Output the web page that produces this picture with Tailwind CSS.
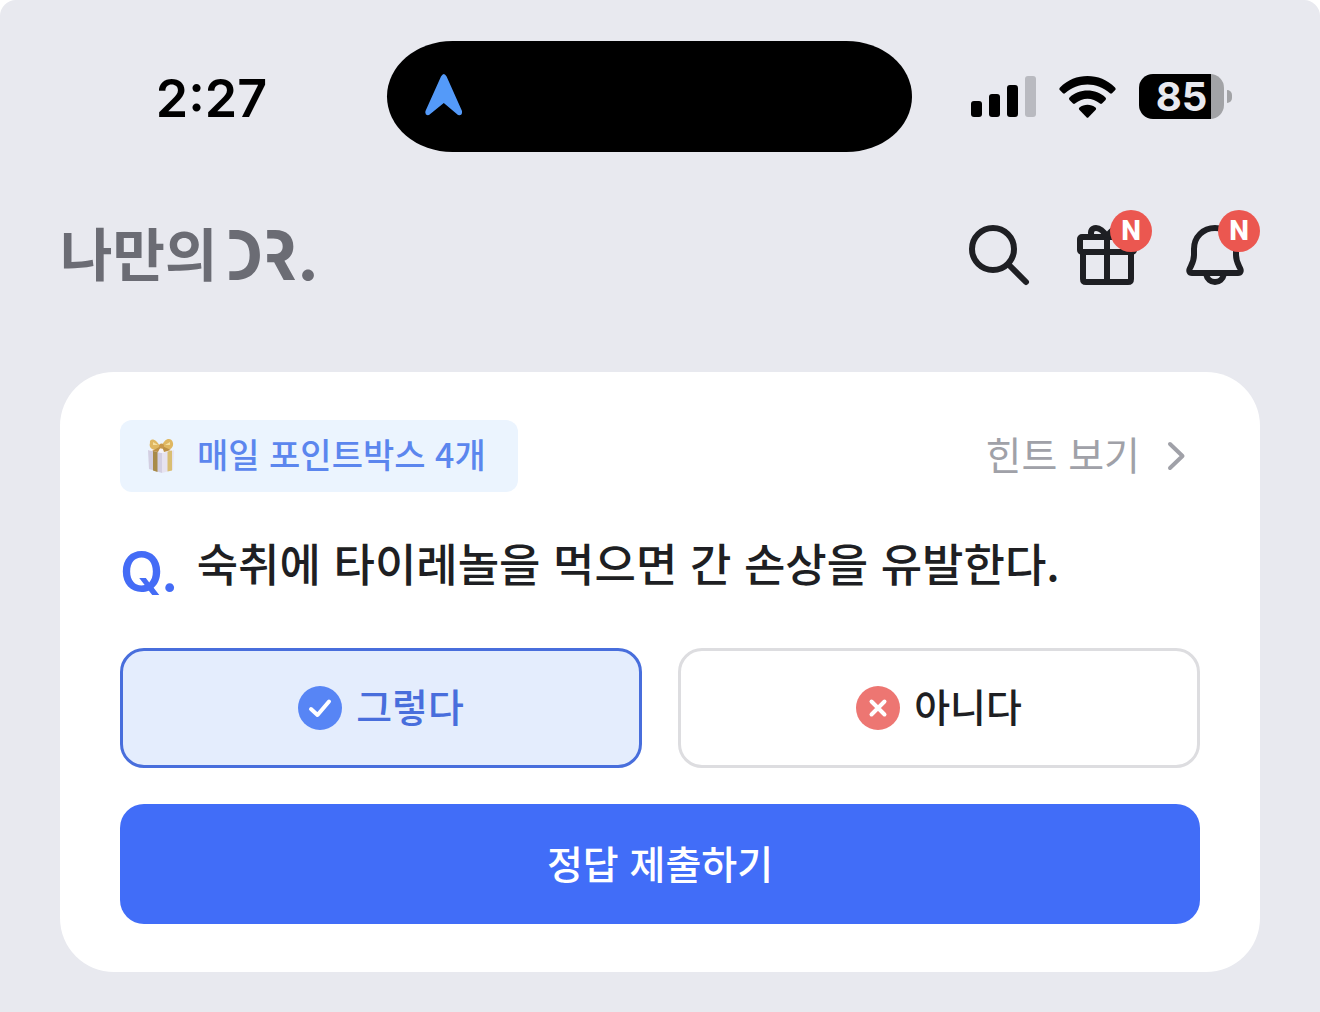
<!DOCTYPE html>
<html lang="ko">
<head>
<meta charset="utf-8">
<meta name="viewport" content="width=device-width, initial-scale=1">
<title>나만의 DR.</title>
<script src="https://cdn.jsdelivr.net/npm/@tailwindcss/browser@4"></script>
</head>
<body class="bg-white font-['Noto_Sans_CJK_KR',sans-serif] text-[#1e1f23]">
<div class="min-h-screen rounded-t-2xl bg-[#e8e9ef] pb-10">

  <!-- Status bar -->
  <div class="grid grid-cols-[387fr_525px_408fr] items-center pt-[41px] font-['Inter',sans-serif] text-black">
    <time class="pt-1 pl-9 text-center text-[52px] leading-none font-semibold">2:27</time>
    <div class="flex h-[111px] items-center rounded-[66px/56px] bg-black pl-9">
      <svg class="h-[46px] w-[42px]" viewBox="0 1 42 46" aria-hidden="true">
        <path d="M18 3.5 Q20.8 -1.5 23.600 3.5 L39 38 Q39.500 43 35 42 L20.8 30 L6 42 Q1.500 43 2.500 38 Z" fill="#549af9"/>
      </svg>
    </div>
    <div class="flex items-center justify-end gap-[23px] pr-[88px]">
      <svg class="h-[42px] w-[65px]" viewBox="0 0 65 42" aria-hidden="true">
        <rect x="0" y="25" width="11" height="16" rx="3"/>
        <rect x="18" y="18" width="11" height="23" rx="3"/>
        <rect x="36" y="9" width="11" height="32" rx="3"/>
        <rect x="54" y="0" width="11" height="41" rx="3" fill="#b9bac0"/>
      </svg>
      <svg class="h-[42px] w-[57px]" viewBox="0 0 57 42" aria-hidden="true">
        <path d="M1 11.500 C16 -3.800 41 -3.800 56 11.500 Q57.300 13 56 14.300 L53 17.300 Q52 18.200 51 17.300 C38 5.500 19 5.500 6 17.300 Q5 18.200 4 17.300 L1 14.300 Q-.3 13 1 11.500Z"/>
        <path d="M10.500 21.500 C20 12.300 37 12.300 46.500 21.500 Q47.600 22.800 46.500 24 L43 27.500 Q42 28.300 41 27.500 C33 21 24 21 16 27.500 Q15 28.300 14 27.500 L10.500 24 Q9.400 22.800 10.500 21.500Z"/>
        <path d="M20.500 31.500 C25 27.900 32 27.900 36.500 31.500 Q37.700 32.700 36.500 34 L29.500 41.200 Q28.500 42.200 27.500 41.200 L20.500 34 Q19.300 32.700 20.500 31.500Z"/>
      </svg>
      <div class="flex items-center gap-[3px]">
        <div class="flex h-[45px] w-[85px] items-center justify-center rounded-[14px] bg-linear-to-r from-black from-85% to-[#a2a3a6] to-85% text-[40px] leading-none font-bold text-[#e8e9ef]">85</div>
        <div class="h-[13px] w-[5px] rounded-r-full bg-[#a2a3a6]"></div>
      </div>
    </div>
  </div>

  <!-- App header -->
  <header class="mt-[67px] flex items-center justify-between pr-[69px] pl-15">
    <h1 class="flex items-center leading-16 font-bold text-[#6b6c74]">
      <span class="pb-2 text-[57px]">나만의</span>
      <span class="flex font-['Inter',sans-serif] text-[69px]"><span class="-ml-1 [clip-path:inset(0_0_0_16px)]">D</span><span class="-ml-3 [clip-path:inset(0_0_0_16px)]">R</span><span>.</span></span>
    </h1>
    <nav class="flex gap-9">
      <button type="button" aria-label="검색">
        <svg class="size-[72px]" viewBox="0 0 72 72" fill="none" stroke="#1e1f23" stroke-width="6" stroke-linecap="round">
          <circle cx="30" cy="30" r="21"/><path d="M46 46 L63 63"/>
        </svg>
      </button>
      <button type="button" aria-label="선물" class="relative">
        <svg class="size-[72px]" viewBox="0 0 72 72" fill="none" stroke="#1e1f23" stroke-width="6" stroke-linejoin="round">
          <rect x="9" y="18" width="54" height="15" rx="2"/>
          <path d="M12 33 V60 Q12 63 15 63 H57 Q60 63 60 60 V33 M36 18 V63"/>
          <path d="M36 18 C32 11 28 9 25 9 C21 9 19 12 20.500 17 M36 18 C40 11 44 9 47 9 C51 9 53 12 51.500 17"/>
        </svg>
        <span class="absolute -top-[9px] left-[39px] flex size-[42px] items-center justify-center rounded-full bg-[#eb5750] font-['Roboto',sans-serif] text-[28px] leading-none font-extrabold text-white">N</span>
      </button>
      <button type="button" aria-label="알림" class="relative">
        <svg class="size-[72px]" viewBox="0 0 72 72" fill="none" stroke="#1e1f23" stroke-width="6" stroke-linejoin="round">
          <path d="M36 9 C24 9 15 18 15 30 V36 C15 42 13 45 11 49 C9.500 52 10.500 54 13 54 H59 C61.500 54 62.500 52 61 49 C59 45 57 42 57 36 V30 C57 18 48 9 36 9Z"/>
          <path d="M27 55 C28 60 32 63 36 63 S44 60 45 55"/>
        </svg>
        <span class="absolute -top-[9px] left-[39px] flex size-[42px] items-center justify-center rounded-full bg-[#eb5750] font-['Roboto',sans-serif] text-[28px] leading-none font-extrabold text-white">N</span>
      </button>
    </nav>
  </header>

  <!-- Daily quiz card -->
  <main class="mx-15 mt-[81px] rounded-[54px] bg-white px-15 py-12">
    <div class="flex items-center justify-between">
      <p class="flex h-[72px] items-center rounded-xl bg-[#ebf4fe] pr-8 pl-6 text-[34px] leading-none font-medium text-[#5b86ee]">
        <svg class="mr-5 h-9 w-[33px]" viewBox="0 0 33 36" aria-hidden="true">
          <path d="M4 12 L18 15 V35 L5 31Z" fill="#d3cfe2"/>
          <path d="M18 15 L30 12 L29 32 L18 35Z" fill="#e6e3f0"/>
          <path d="M4 12 L17 9 L30 12 L18 15Z" fill="#f6f3f7"/>
          <path d="M9 13 L13.500 14 V34 L9 32.500Z" fill="#a88a48"/>
          <path d="M23.500 13.500 L28 12.500 V32.500 L23.500 33.500Z" fill="#d9be72"/>
          <path d="M17 10 C12 -1 5 0 6 5 C4 11 11 14 17 10Z M17 10 C21 -2 28 0 29 5 C30 11 23 14 17 10Z" fill="#dfb761"/>
          <path d="M17 8 L8 13 L14 14Z M18 8 L20 14 L27 12Z" fill="#bd9145"/>
          <path d="M9 4 L14 7 L9 7Z M26 4 L21 7 L26 7Z" fill="#f5df9e"/>
          <circle cx="17.500" cy="8" r="2.500" fill="#c8984b"/>
        </svg>
        <span class="pb-1">매일 포인트박스 4개</span>
      </p>
      <a href="#hint" class="flex items-center gap-6 pr-3 text-[39px] leading-none text-[#a0a1a8]">
        <span class="pb-1.5">힌트 보기</span>
        <svg class="h-8 w-6" viewBox="0 0 24 32" fill="none" stroke="#a0a1a8" stroke-width="4" stroke-linecap="round" stroke-linejoin="round" aria-hidden="true"><path d="M6 4 L18.500 16 L6 28"/></svg>
      </a>
    </div>

    <form>
      <fieldset>
        <legend class="flex h-[156px] items-center gap-[18px] text-[45px] leading-none font-medium">
          <span class="pt-1 font-['Inter',sans-serif] text-[56px] font-semibold text-[#446cf6]">Q.</span>
          <span class="pb-4">숙취에 타이레놀을 먹으면 간 손상을 유발한다.</span>
        </legend>
        <div class="grid grid-cols-2 gap-9 text-[39px] leading-none font-medium">
          <label class="flex h-[120px] items-center justify-center gap-[14px] rounded-3xl border-3 border-[#486edc] bg-[#e4edfd] text-[#486edc]">
            <input type="radio" name="answer" value="yes" checked class="sr-only">
            <svg class="size-11" viewBox="0 0 44 44" aria-hidden="true"><circle cx="22" cy="22" r="22" fill="#5785f5"/><path d="M13 23 L19.500 29 L31 15.500" fill="none" stroke="#fff" stroke-width="4" stroke-linecap="round" stroke-linejoin="round"/></svg>
            <span class="pb-1.5">그렇다</span>
          </label>
          <label class="flex h-[120px] items-center justify-center gap-[14px] rounded-3xl border-3 border-[#dddde0] bg-white">
            <input type="radio" name="answer" value="no" class="sr-only">
            <svg class="size-11" viewBox="0 0 44 44" aria-hidden="true"><circle cx="22" cy="22" r="22" fill="#ed7672"/><path d="M15.500 15.500 L28.500 28.500 M28.500 15.500 L15.500 28.500" stroke="#fff" stroke-width="4" stroke-linecap="round"/></svg>
            <span class="pb-1.5">아니다</span>
          </label>
        </div>
      </fieldset>
      <button type="submit" class="mt-9 h-[120px] w-full rounded-3xl bg-[#416df8] pb-1 text-[39px] font-medium text-white">정답 제출하기</button>
    </form>
  </main>
</div>
</body>
</html>
